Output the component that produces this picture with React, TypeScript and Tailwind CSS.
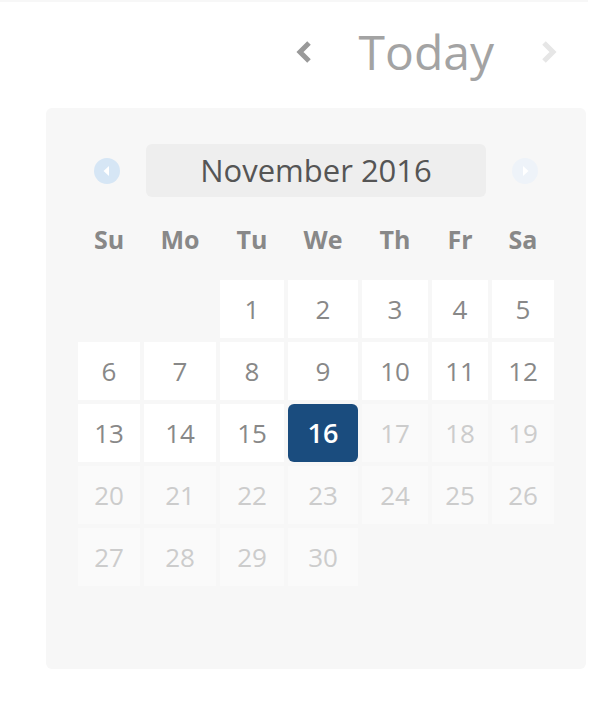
const headers = ["Su", "Mo", "Tu", "We", "Th", "Fr", "Sa"];

// November 2016 starts on a Tuesday
const cells: (number | null)[] = [
  null, null,
  ...Array.from({ length: 30 }, (_, i) => i + 1),
];
while (cells.length % 7 !== 0) cells.push(null);

const today = 16;

function Chevron({ dir, className }: { dir: "left" | "right"; className: string }) {
  return (
    <svg width="18" height="24" viewBox="0 0 18 24" className={className}>
      <path
        d={dir === "left" ? "M14 3 L5 12 L14 21" : "M4 3 L13 12 L4 21"}
        fill="none"
        stroke="currentColor"
        strokeWidth="5"
      />
    </svg>
  );
}

function Circle({ dir, className }: { dir: "left" | "right"; className: string }) {
  return (
    <svg width="26" height="26" viewBox="0 0 26 26" className={className}>
      <circle cx="13" cy="13" r="13" fill="currentColor" />
      <path d={dir === "left" ? "M15 8 L9.5 13 L15 18 Z" : "M11 8 L16.5 13 L11 18 Z"} fill="#fff" />
    </svg>
  );
}

export default function App() {
  return (
    <div className="min-h-[714px] w-[616px] bg-white font-['Open_Sans',sans-serif]">
      <div className="h-[2px] w-[588px] bg-[#f7f7f7]" />

      <div className="flex h-[100px] items-center justify-end pr-[58px]">
        <Chevron dir="left" className="text-[#999]" />
        <span className="mx-[46px] text-[48px] leading-none text-[#a3a3a3]">Today</span>
        <Chevron dir="right" className="text-[#e6e6e6]" />
      </div>

      <div className="ml-[46px] mt-[6px] h-[561px] w-[540px] rounded-md bg-[#f7f7f7] px-8 pt-9">
        <div className="flex h-[53px] items-center justify-between px-4">
          <Circle dir="left" className="text-[#d6e6f5]" />
          <div className="flex h-[53px] w-[340px] items-center justify-center rounded-md bg-[#eeeeee] text-[31px] text-[#555]">
            November 2016
          </div>
          <Circle dir="right" className="text-[#eef3f9]" />
        </div>

        <div className="mt-[23px] grid h-[40px] grid-cols-[62px_72px_64px_70px_66px_56px_62px] gap-x-1">
          {headers.map((h) => (
            <div key={h} className="flex items-center justify-center text-[25px] font-bold text-[#888]">
              {h}
            </div>
          ))}
        </div>

        <div className="mt-5 grid grid-cols-[62px_72px_64px_70px_66px_56px_62px] gap-1">
          {cells.map((d, i) => {
            if (d === null) return <div key={i} className="h-[58px]" />;
            if (d === today)
              return (
                <div
                  key={i}
                  className="flex h-[58px] items-center justify-center rounded-md bg-[#1a4c7e] text-[27px] font-semibold text-white"
                >
                  {d}
                </div>
              );
            const past = d < today;
            return (
              <div
                key={i}
                className={
                  past
                    ? "flex h-[58px] items-center justify-center bg-white text-[26px] text-[#888]"
                    : "flex h-[58px] items-center justify-center bg-[#fafafa] text-[26px] text-[#cccccc]"
                }
              >
                {d}
              </div>
            );
          })}
        </div>
      </div>
    </div>
  );
}
